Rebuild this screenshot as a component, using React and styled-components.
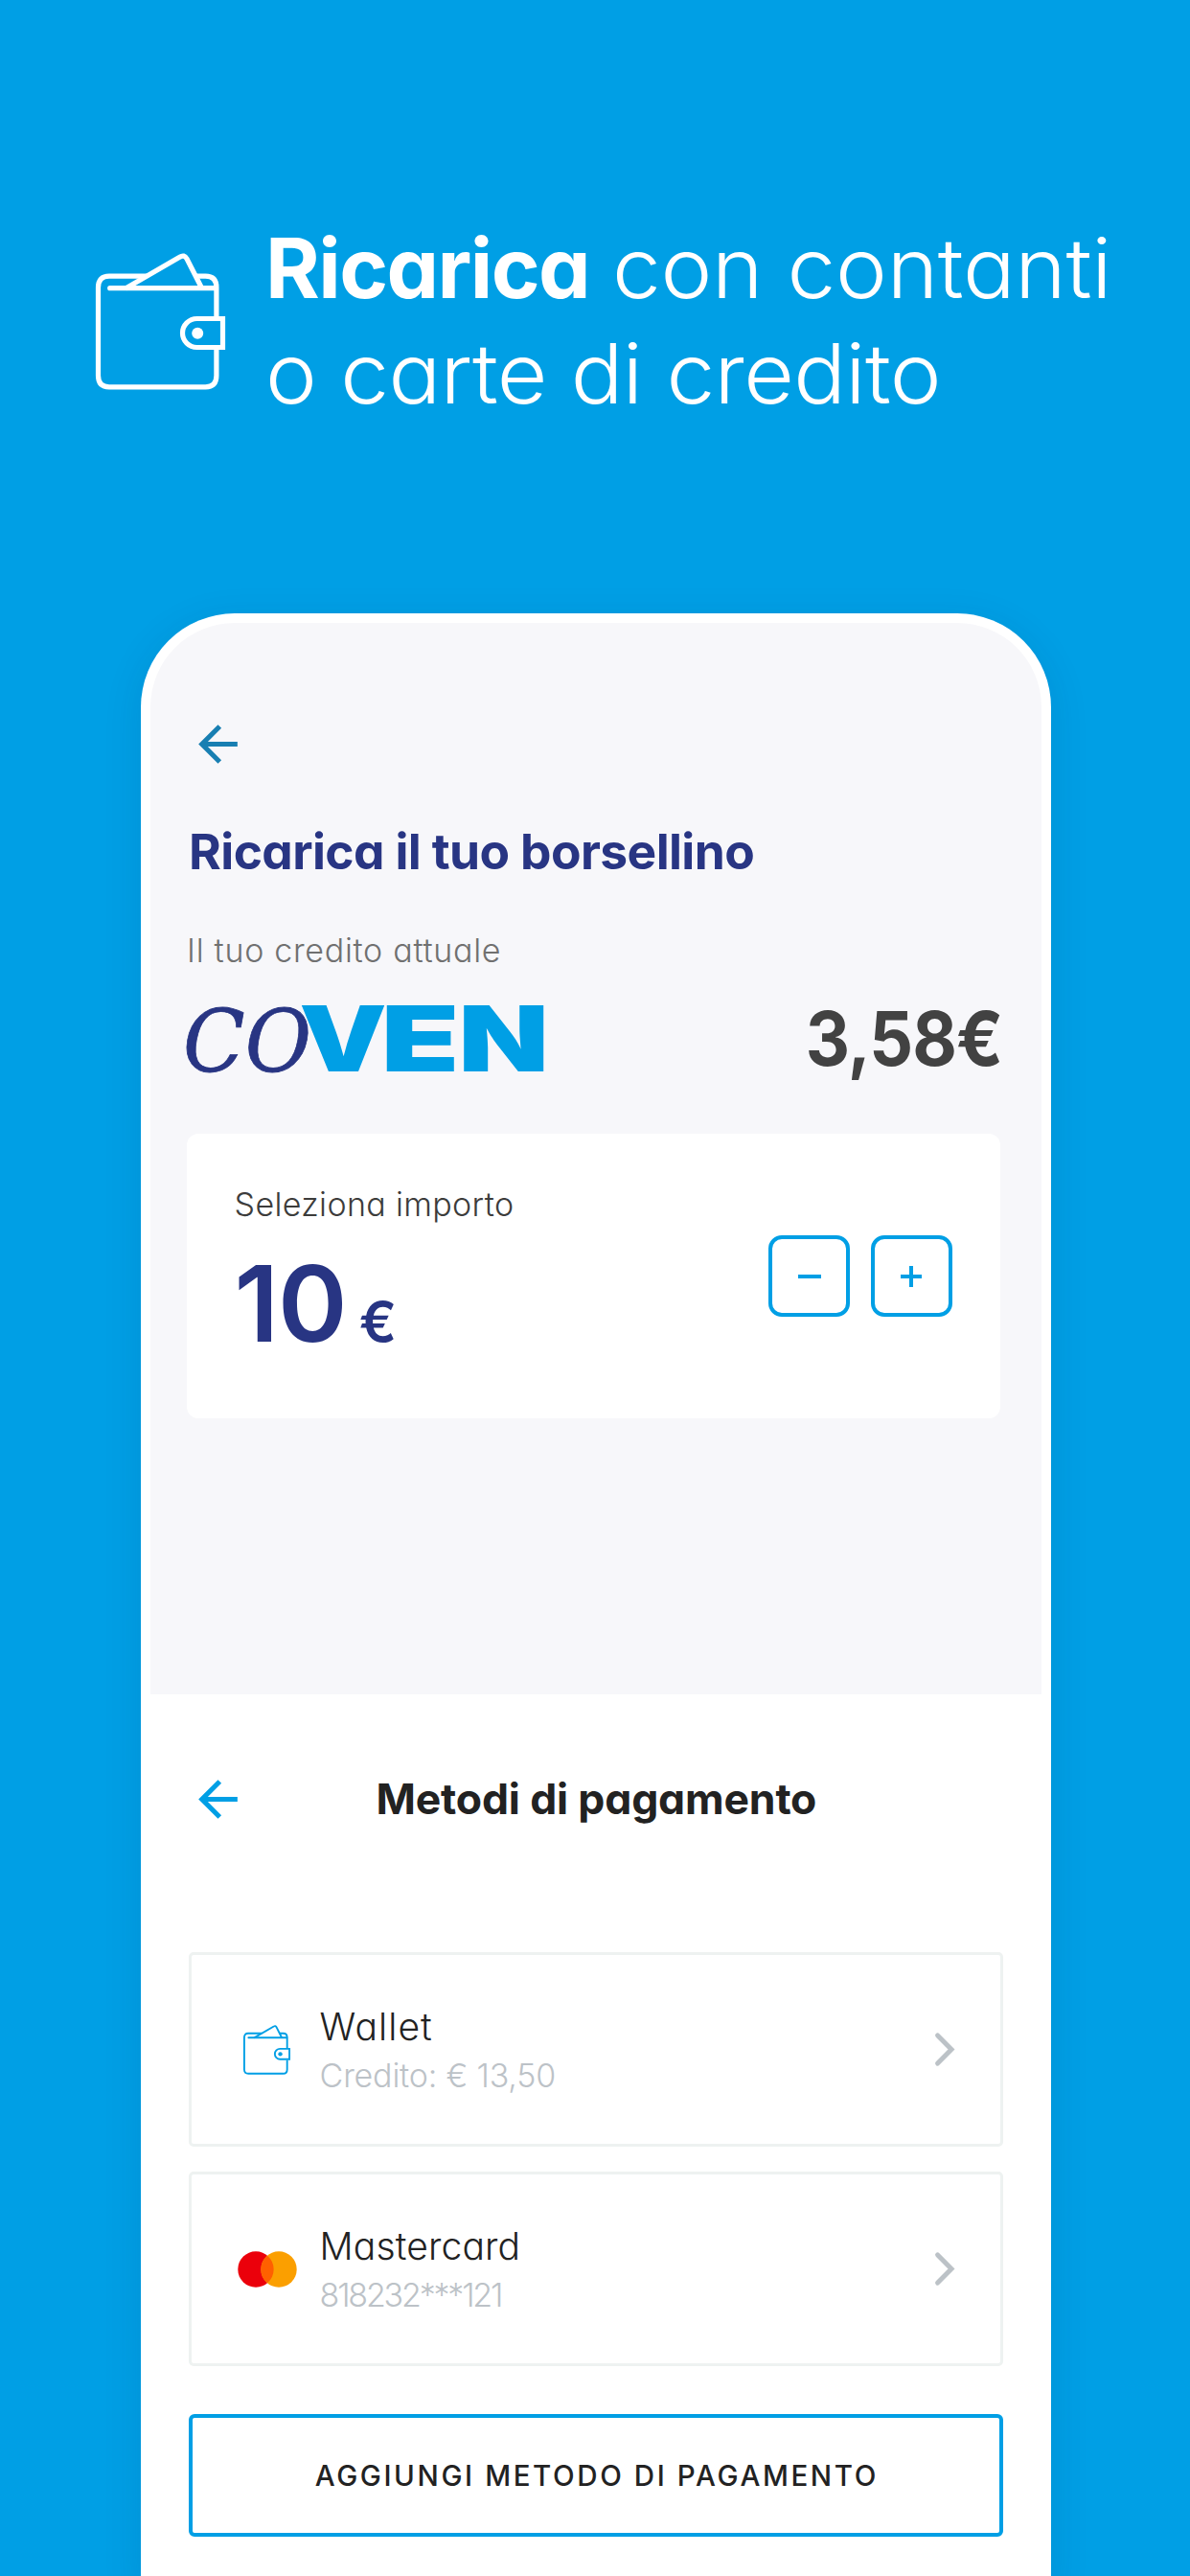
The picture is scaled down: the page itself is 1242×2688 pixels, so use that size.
import styled, {createGlobalStyle} from 'styled-components';

const GlobalStyle = createGlobalStyle`
  * {
    box-sizing: border-box;
    margin: 0;
    padding: 0;
  }

  body {
    background-color: #009fe5;
    font-family: Inter, 'Liberation Sans', sans-serif;
    font-feature-settings: 'cv11';
  }

  svg {
    display: block;
    flex-shrink: 0;
    overflow: visible;
  }
`;

const Page = styled.main`
  width: 1242px;
  height: 2688px;
  overflow: hidden;
  background-color: #009fe5;
`;

const Hero = styled.header`
  display: flex;
  align-items: flex-start;
  gap: 42px;
  height: 640px;
  padding: 225px 0 0 100px;
  color: white;

  svg {
    margin-top: 39px;
  }
`;

const Headline = styled.h1`
  font-size: 86.6px;
  font-weight: 330;
  line-height: 110px;
  white-space: nowrap;
`;

const HeadlineLine = styled.span`
  display: block;

  strong {
    font-weight: 700;
    letter-spacing: -1.6px;
  }
`;

const Light = styled.span`
  display: inline-block;
  letter-spacing: ${(props) => props.$spacing};
  transform: scaleX(1.05);
  transform-origin: left;
`;

const Phone = styled.div`
  width: 950px;
  height: 2060px;
  margin-left: 146.6px;
  padding: 10px;
  border-radius: 98px 98px 0 0;
  background-color: white;
  box-shadow: 0 10px 40px rgba(0, 40, 90, 0.12);
`;

const Screen = styled.section`
  height: 1118px;
  padding: 96px 43px 0 38.5px;
  border-radius: 88px 88px 0 0;
  background-color: #f7f7fa;

  > svg {
    margin-left: 2px;
  }
`;

const ScreenTitle = styled.h2`
  margin: 51px 0 0 2px;
  color: #283583;
  font-size: 51.5px;
  font-weight: 700;
  line-height: 60px;
  letter-spacing: -0.6px;
`;

const Label = styled.p`
  color: ${(props) => props.$color};
  font-size: 34px;
  font-weight: 330;
  line-height: 40px;
  letter-spacing: ${(props) => props.$spacing};
`;

const BalanceLabel = styled(Label)`
  margin-top: 54px;
`;

const Balance = styled.div`
  display: flex;
  align-items: center;
  justify-content: space-between;
  height: 80px;
  margin: 31.5px -3px 0 0;
`;

const Credit = styled.span`
  color: #424242;
  font-size: 78px;
  font-weight: 700;
  line-height: 80px;
  letter-spacing: -1px;
  transform: scaleX(0.92);
  transform-origin: right;
`;

const AmountCard = styled.div`
  display: flex;
  justify-content: space-between;
  align-items: flex-start;
  height: 297px;
  margin-top: 59.5px;
  padding: 53.5px 50px 0 49.5px;
  border-radius: 12px;
  background-color: white;
`;

const Amount = styled.div`
  display: flex;
  align-items: baseline;
  gap: 13px;
  margin-top: 28.2px;
  color: #283583;
  font-size: 110px;
  font-weight: 600;
  line-height: 110px;
  letter-spacing: -1px;

  small {
    font-size: 58px;
    line-height: 58px;
  }
`;

const Stepper = styled.div`
  display: flex;
  gap: 21.5px;
  margin-top: 52.5px;
`;

const StepButton = styled.button`
  display: flex;
  align-items: center;
  justify-content: center;
  width: 85px;
  height: 85px;
  border: 4px solid #009fe5;
  border-radius: 14px;
  background: none;
  color: #009fe5;
`;

const Sheet = styled.section`
  padding: 79px 40px 0 40.5px;
`;

const SheetHeader = styled.div`
  display: grid;
  grid-template-columns: 61px 1fr 61px;
  align-items: center;
  height: 61px;
`;

const SheetTitle = styled.h2`
  margin: -2px 0 0 1px;
  color: #222;
  font-size: 44.5px;
  font-weight: 700;
  line-height: 60px;
  letter-spacing: -0.15px;
  text-align: center;
`;

const Methods = styled.ul`
  display: flex;
  flex-direction: column;
  gap: 26px;
  margin-top: 129px;
  list-style: none;
`;

const Method = styled.li`
  display: flex;
  align-items: center;
  height: 203px;
  padding: 0 48px 0 47.5px;
  border: 3px solid #eef2f1;
  border-radius: 5px;
`;

const MethodIcon = styled.div`
  display: flex;
  justify-content: center;
  width: 62px;
  margin-right: 24px;
  color: #009fe5;
`;

const MethodText = styled.div`
  flex: 1;
  margin-top: 5px;
  line-height: 50.8px;
`;

const MethodName = styled.p`
  color: #222;
  font-size: 39px;
  font-weight: 330;
  letter-spacing: ${(props) => props.$spacing};
`;

const MethodDetail = styled.p`
  color: #bcc2c7;
  font-size: 34px;
  font-weight: 330;
  letter-spacing: ${(props) => props.$spacing};
`;

const AddButton = styled.button`
  width: 100%;
  height: 127.5px;
  margin-top: 50px;
  padding-left: 2px;
  border: 4px solid #009fe5;
  border-radius: 6px;
  background: none;
  color: #222;
  font-family: inherit;
  font-size: 29.5px;
  font-weight: 550;
  letter-spacing: 2.6px;
`;

const WalletIcon = ({width, height}) => (
  <svg width={width} height={height} viewBox="0 0 135 142.5" fill="none" stroke="currentColor" strokeWidth="5.2">
    <path d="M53 24.2H14Q2.5 24.2 2.5 36V128Q2.5 139.8 14 139.8H114.5Q125.9 139.8 125.9 128V101" />
    <path d="M105 24.2H114.5Q125.9 24.2 125.9 36V66" />
    <path d="M14.7 36.7H125" strokeLinecap="round" />
    <path d="M31 37L87.5 4.2Q92.3 1.2 95 6L110.5 36.5" />
    <path d="M132.5 68.5H105.5A15 15 0 0 0 105.5 98.5H132.5Z" />
    <circle cx="106.2" cy="83.7" r="6" fill="currentColor" stroke="none" />
  </svg>
);

const BackIcon = ({color}) => (
  <svg width="61" height="61" viewBox="0 0 24 24" fill={color}>
    <path d="M20 11H7.83l5.59-5.59L12 4l-8 8 8 8 1.41-1.41L7.83 13H20v-2z" />
  </svg>
);

const MastercardIcon = () => (
  <svg width="62" height="38" viewBox="0 0 62 38">
    <circle cx="19" cy="19" r="18.7" fill="#eb000b" />
    <circle cx="43" cy="19" r="18.7" fill="#fb9f00" />
    <path d="M31 4.7a18.7 18.7 0 0 1 0 28.6a18.7 18.7 0 0 1 0-28.6z" fill="#ff6000" />
  </svg>
);

const ChevronIcon = () => (
  <svg width="20" height="35" viewBox="0 0 20 35" fill="none" stroke="#bcc2c7" strokeWidth="5" strokeLinecap="round">
    <path d="M2.6 2.9L17 17.5L2.6 32.1" />
  </svg>
);

const LogoSerif = styled.text`
  fill: #283583;
  stroke: #283583;
  stroke-width: 0.8px;
  font-family: 'DejaVu Serif', serif;
  font-size: 90px;
  font-style: italic;
`;

const LogoSans = styled.text`
  fill: #009fe5;
  font-size: 94.4px;
  font-weight: 900;
`;

const Logo = () => (
  <svg width="376" height="80" viewBox="0 0 376 80">
    <LogoSerif x="-4" y="74" textLength="134" lengthAdjust="spacingAndGlyphs">CO</LogoSerif>
    <LogoSans transform="translate(117.2 74.2) scale(1.22 1)">V</LogoSans>
    <LogoSans transform="translate(202.5 74.2) scale(1.42 1)">E</LogoSans>
    <LogoSans transform="translate(283.5 74.2) scale(1.3 1)">N</LogoSans>
  </svg>
);

const methods = [
  {
    name: 'Wallet',
    nameSpacing: '1.1px',
    detail: 'Credito: € 13,50',
    detailSpacing: '-0.2px',
    icon: <WalletIcon width={49} height={51.7} />,
  },
  {
    name: 'Mastercard',
    nameSpacing: '0.15px',
    detail: '818232***121',
    detailSpacing: '-2.2px',
    icon: <MastercardIcon />,
  },
];

const App = () => (
  <>
    <GlobalStyle />
    <Page>
      <Hero>
        <WalletIcon width={135} height={142.5} />
        <Headline>
          <HeadlineLine>
            <strong>Ricarica</strong> <Light $spacing="-0.3px">con contanti</Light>
          </HeadlineLine>
          <HeadlineLine>
            <Light $spacing="-0.6px">o carte di credito</Light>
          </HeadlineLine>
        </Headline>
      </Hero>
      <Phone>
        <Screen>
          <BackIcon color="#187fb2" />
          <ScreenTitle>Ricarica il tuo borsellino</ScreenTitle>
          <BalanceLabel $color="#707070" $spacing="0.7px">Il tuo credito attuale</BalanceLabel>
          <Balance>
            <Logo />
            <Credit>3,58€</Credit>
          </Balance>
          <AmountCard>
            <div>
              <Label $color="#3c3c3b" $spacing="0.35px">Seleziona importo</Label>
              <Amount>
                10<small>€</small>
              </Amount>
            </div>
            <Stepper>
              <StepButton>
                <svg width="24" height="24" viewBox="0 0 24 24" stroke="currentColor" strokeWidth="4">
                  <path d="M0 12H24" />
                </svg>
              </StepButton>
              <StepButton>
                <svg width="22" height="22" viewBox="0 0 22 22" stroke="currentColor" strokeWidth="4">
                  <path d="M0 11H22M11 0V22" />
                </svg>
              </StepButton>
            </Stepper>
          </AmountCard>
        </Screen>
        <Sheet>
          <SheetHeader>
            <BackIcon color="#009fe5" />
            <SheetTitle>Metodi di pagamento</SheetTitle>
          </SheetHeader>
          <Methods>
            {methods.map((method) => (
              <Method key={method.name}>
                <MethodIcon>{method.icon}</MethodIcon>
                <MethodText>
                  <MethodName $spacing={method.nameSpacing}>{method.name}</MethodName>
                  <MethodDetail $spacing={method.detailSpacing}>{method.detail}</MethodDetail>
                </MethodText>
                <ChevronIcon />
              </Method>
            ))}
          </Methods>
          <AddButton>AGGIUNGI METODO DI PAGAMENTO</AddButton>
        </Sheet>
      </Phone>
    </Page>
  </>
);

export default App;
